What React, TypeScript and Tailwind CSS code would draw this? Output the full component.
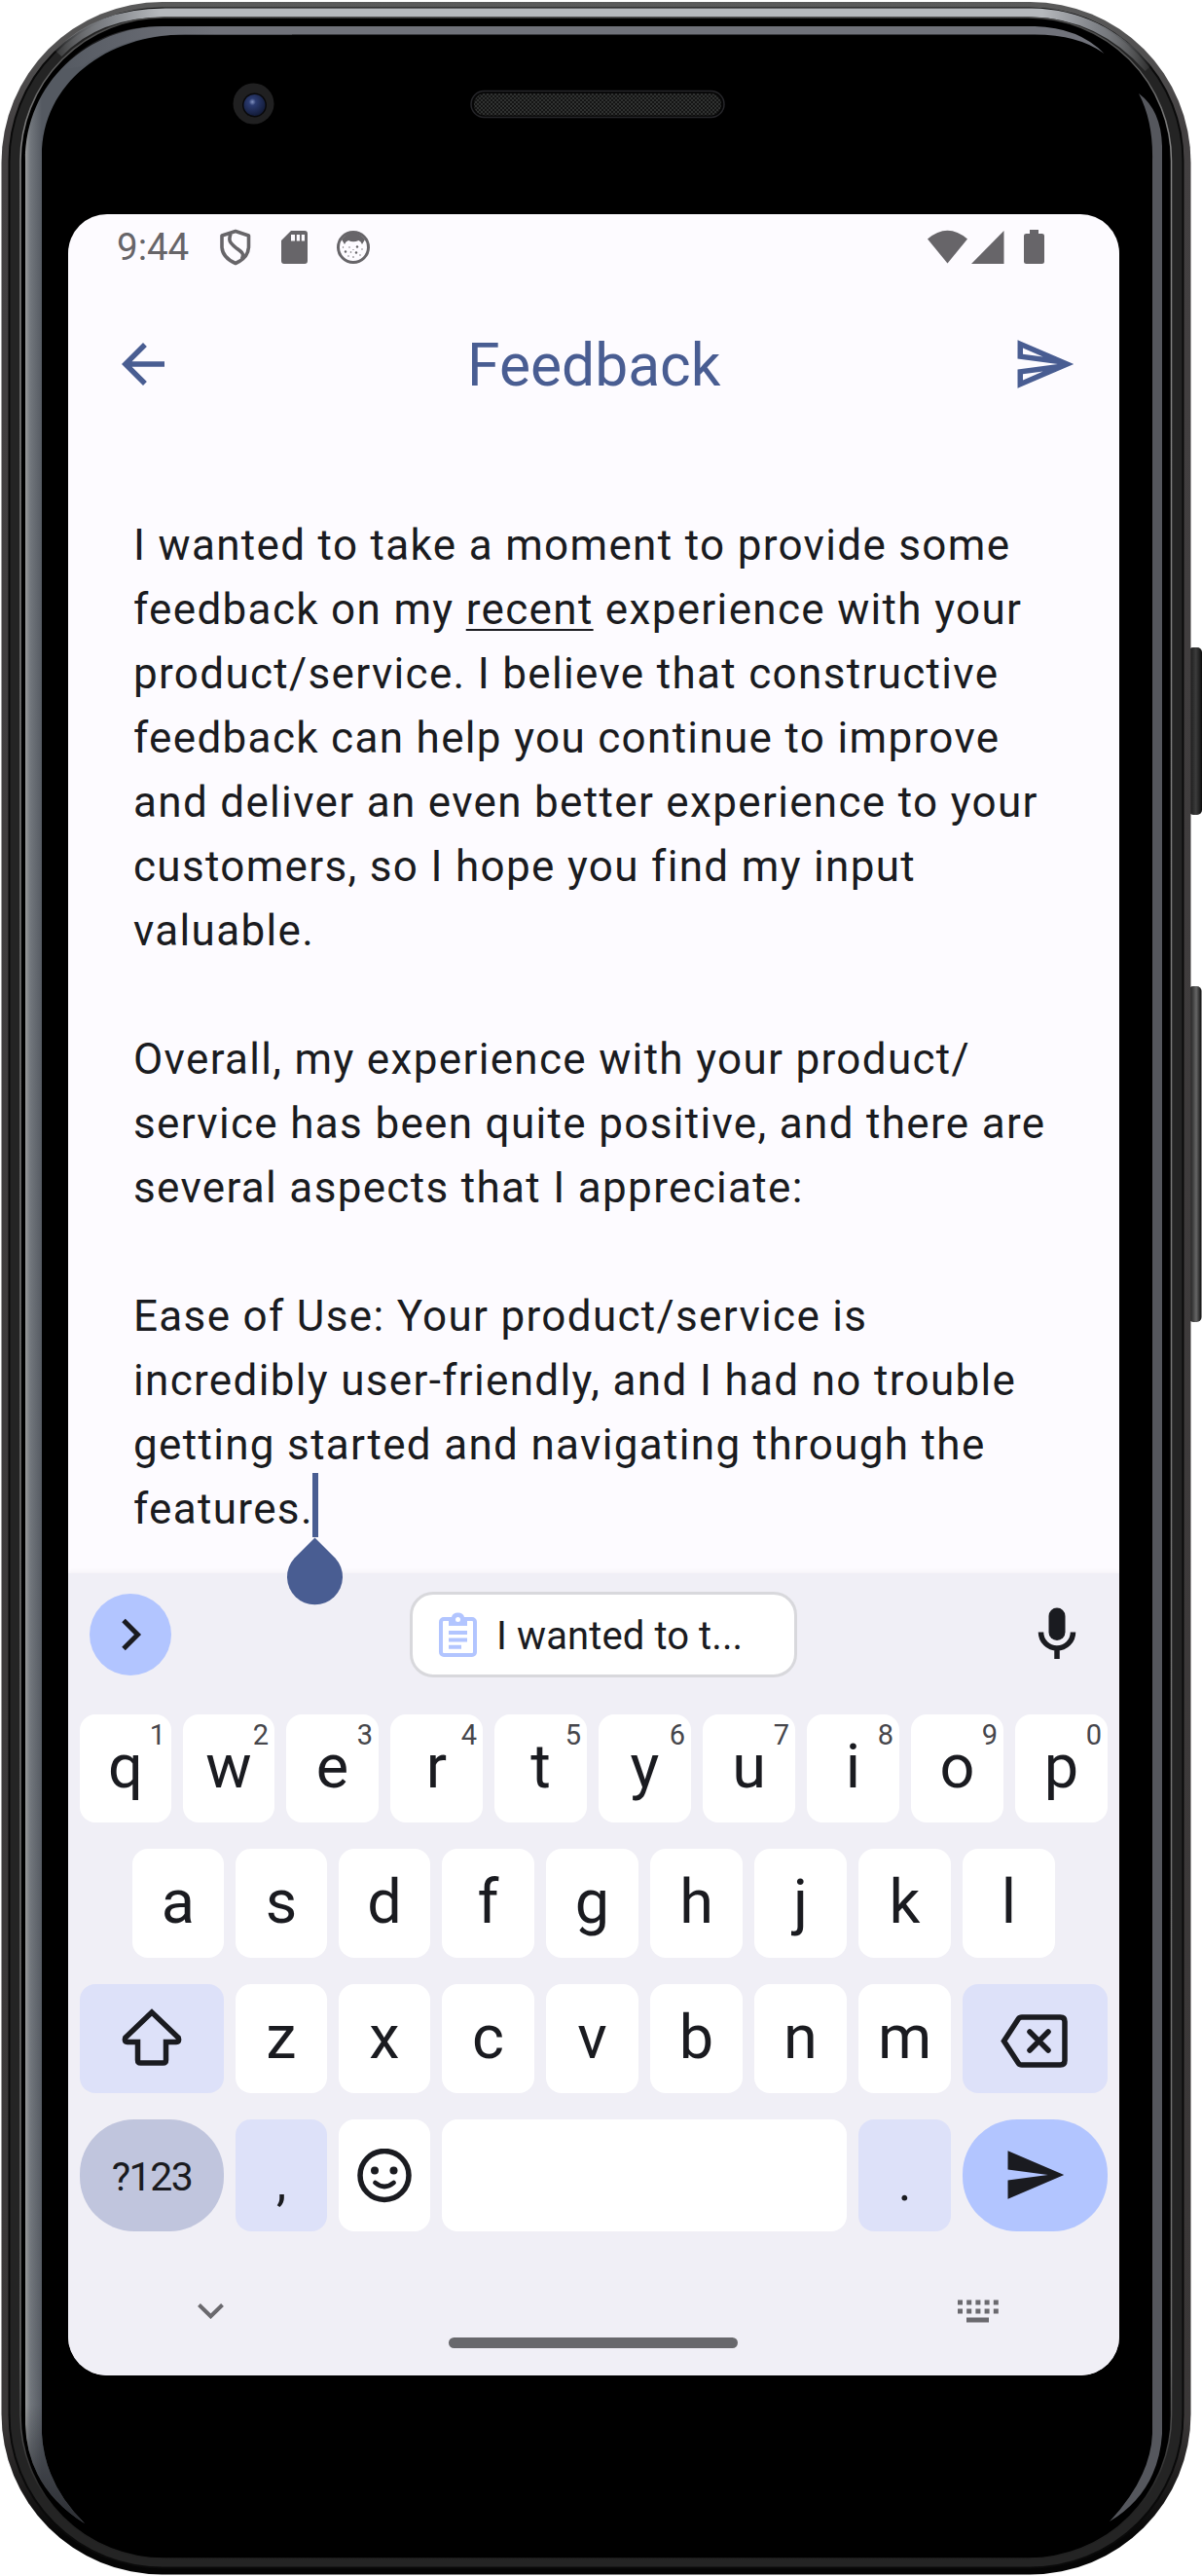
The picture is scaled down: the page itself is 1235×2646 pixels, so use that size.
import React from "react";

const PARAGRAPHS: string[][] = [
  [
    "I wanted to take a moment to provide some",
    "feedback on my recent experience with your",
    "product/service. I believe that constructive",
    "feedback can help you continue to improve",
    "and deliver an even better experience to your",
    "customers, so I hope you find my input",
    "valuable.",
  ],
  [
    "Overall, my experience with your product/",
    "service has been quite positive, and there are",
    "several aspects that I appreciate:",
  ],
  [
    "Ease of Use: Your product/service is",
    "incredibly user-friendly, and I had no trouble",
    "getting started and navigating through the",
    "features.",
  ],
];

const ROW_1 = ["q", "w", "e", "r", "t", "y", "u", "i", "o", "p"];
const ROW_2 = ["a", "s", "d", "f", "g", "h", "j", "k", "l"];
const ROW_3 = ["z", "x", "c", "v", "b", "n", "m"];

function PhoneShell() {
  return (
    <svg className="pointer-events-none absolute inset-0 h-[2646px] w-[1235px]" viewBox="0 0 1235 2646" fill="none" aria-hidden="true">
      <defs>
        <linearGradient id="rimLeft" gradientUnits="userSpaceOnUse" x1="26" y1="0" x2="43" y2="0">
          <stop offset="0" stopColor="#9a9b9b" />
          <stop offset="0.3" stopColor="#72777d" />
          <stop offset="1" stopColor="#555a62" />
        </linearGradient>
        <linearGradient id="rimTop" gradientUnits="userSpaceOnUse" x1="60" y1="0" x2="220" y2="0">
          <stop offset="0" stopColor="#70727a" stopOpacity="0" />
          <stop offset="1" stopColor="#70727a" />
        </linearGradient>
        <linearGradient id="rimTail" gradientUnits="userSpaceOnUse" x1="0" y1="2470" x2="0" y2="2592">
          <stop offset="0" stopColor="#2c2e33" stopOpacity="0" />
          <stop offset="1" stopColor="#2c2e33" />
        </linearGradient>
        <linearGradient id="topLight" gradientUnits="userSpaceOnUse" x1="50" y1="0" x2="1185" y2="0">
          <stop offset="0" stopColor="#b9bcc0" stopOpacity="0" />
          <stop offset="0.05" stopColor="#7d8085" />
          <stop offset="0.1" stopColor="#b5b8bc" />
          <stop offset="0.9" stopColor="#b5b8bc" />
          <stop offset="0.95" stopColor="#7d8085" />
          <stop offset="1" stopColor="#b9bcc0" stopOpacity="0" />
        </linearGradient>
        <linearGradient id="hair" gradientUnits="userSpaceOnUse" x1="0" y1="18" x2="0" y2="2628">
          <stop offset="0" stopColor="#444" />
          <stop offset="0.05" stopColor="#858585" />
          <stop offset="0.92" stopColor="#6d6d6d" />
          <stop offset="0.98" stopColor="#222" />
        </linearGradient>
        <linearGradient id="edge" gradientUnits="userSpaceOnUse" x1="0" y1="0" x2="0" y2="2646">
          <stop offset="0" stopColor="#5b5b5b" />
          <stop offset="0.05" stopColor="#434041" />
          <stop offset="0.94" stopColor="#3a3737" />
          <stop offset="0.985" stopColor="#050505" />
        </linearGradient>
        <linearGradient id="btn" x1="0" y1="0" x2="1" y2="0">
          <stop offset="0" stopColor="#111" />
          <stop offset="0.55" stopColor="#3c3c3c" />
          <stop offset="1" stopColor="#0c0c0c" />
        </linearGradient>
        <linearGradient id="btn2" x1="0" y1="0" x2="1" y2="0">
          <stop offset="0" stopColor="#0c0c0c" />
          <stop offset="0.6" stopColor="#666" />
          <stop offset="1" stopColor="#0c0c0c" />
        </linearGradient>
        <radialGradient id="lens" cx="0.4" cy="0.35" r="0.65">
          <stop offset="0" stopColor="#8292c0" />
          <stop offset="0.25" stopColor="#2b3b70" />
          <stop offset="1" stopColor="#131c3a" />
        </radialGradient>
        <pattern id="mesh" width="4" height="4" patternUnits="userSpaceOnUse">
          <rect width="4" height="4" fill="#151515" />
          <circle cx="1" cy="1" r="0.8" fill="#505452" />
          <circle cx="3" cy="3" r="0.8" fill="#505452" />
        </pattern>
      </defs>
      <rect x="1221" y="665" width="14" height="172" rx="5" fill="url(#btn)" />
      <rect x="1221" y="1013" width="13.500" height="345" rx="5" fill="url(#btn2)" />
      <rect x="1.500" y="2" width="1222" height="2642.500" rx="165" fill="url(#edge)" />
      <rect x="9.500" y="8.500" width="1206" height="2629" rx="157" fill="#242424" stroke="#0a0a0a" strokeWidth="2" />
      <path d="M60 55 Q100 13 170 13 H1060 Q1130 14 1180 70" stroke="url(#topLight)" strokeWidth="9" />
      <rect x="21" y="18" width="1182.500" height="2610" rx="147" fill="#000" stroke="url(#hair)" strokeWidth="1.500" />
      <path
        d="M26 165 C26 85 90 27 168 27 H300 V35.500 H190 C110 35.500 43 85 43 160 V2500 Q46 2552 87 2592 Q28 2555 26 2490 Z"
        fill="url(#rimLeft)"
      />
      <path d="M26 2470 H43 V2500 Q46 2552 87 2592 Q28 2555 26 2490 Z" fill="url(#rimTail)" />
      <path d="M60 72 C90 40 125 27 168 27 H1063 Q1108 28 1134.500 55 Q1108 35.500 1063 35.500 H190 C150 35.500 115 45 85 68 Z" fill="url(#rimTop)" />
      <path d="M1170 96 Q1193 113 1194 150 V2500 Q1190 2560 1140 2590 Q1182 2545 1184 2500 V165 Q1185 125 1170 96 Z" fill="#55575d" />
      <circle cx="260.500" cy="106.500" r="21" fill="#202021" />
      <circle cx="261.500" cy="108" r="12.500" fill="#08080a" />
      <circle cx="261.500" cy="108" r="11" fill="url(#lens)" />
      <rect x="484" y="93.500" width="260" height="27" rx="13.500" fill="#060606" stroke="#26262a" strokeWidth="1.500" />
      <rect x="487" y="96" width="254" height="22.500" rx="11" fill="url(#mesh)" />
    </svg>
  );
}

function StatusBar() {
  return (
    <div className="flex h-[67px] items-center pl-[50px] pr-[77px] text-[#676569]">
      <span className="w-[106px] pt-[2px] text-[38.5px] leading-none">9:44</span>
      <svg className="h-[38px] w-[32px]" viewBox="0 0 32 38" fill="none" stroke="currentColor" strokeWidth="3.600" strokeLinejoin="round">
        <path d="M16 2.500 L29.500 7 V18 C29.500 26 24 32 16 35.500 C8 32 2 26 2 18 V7 Z" />
        <path d="M11 5 C8 13 11 15 17 20 C23 24 25 26 22.500 31" />
      </svg>
      <svg className="ml-[31px] h-[34px] w-[27px]" viewBox="0 0 27 34" fill="currentColor">
        <path fillRule="evenodd" d="M10 0 H24 Q27 0 27 3 V31 Q27 34 24 34 H3 Q0 34 0 31 V10 Z M10 4 V10.500 H14 V4 Z M15.800 4 V10.500 H19 V4 Z M20.800 4 V10.500 H24 V4 Z" />
      </svg>
      <svg className="ml-[30px] h-[34px] w-[34px]" viewBox="0 0 34 34" fill="currentColor">
        <circle cx="17" cy="17" r="15.500" fill="none" stroke="currentColor" strokeWidth="3" />
        <path d="M5 9 Q17 -5 29 9 L26 14 Q25 11 22.500 10 Q17 12.500 12 10 Q9 11 8 14 Z" />
        <g>
          <circle cx="9" cy="21.500" r="1.200" /><circle cx="21" cy="16.500" r="1.200" /><circle cx="20" cy="22.500" r="1.200" />
          <circle cx="13" cy="17" r="0.700" /><circle cx="14.500" cy="22" r="0.800" /><circle cx="26" cy="19" r="0.700" />
          <circle cx="12" cy="26" r="0.700" /><circle cx="17" cy="27" r="0.800" /><circle cx="24" cy="25" r="0.700" />
          <circle cx="6.500" cy="17" r="0.700" /><circle cx="17" cy="19.500" r="0.600" />
        </g>
      </svg>
      <svg className="ml-auto h-[35px] w-[121px]" viewBox="0 0 121 35" fill="currentColor">
        <path d="M21.500 34.500 L1 9.500 Q21.500 -8 42 9.500 Z" />
        <path d="M79.500 1 V35 H46 Z" />
        <path d="M106 0 H115 V4 H118.500 Q121 4 121 6 V33 Q121 35 118.500 35 H102.500 Q100 35 100 33 V6 Q100 4 102.500 4 H106 Z" />
      </svg>
    </div>
  );
}

function AppBar() {
  return (
    <header className="mt-[44px] flex h-[86px] items-center justify-between pl-11 pr-[43.5px] text-[#495d92]">
      <svg className="h-[66px] w-[66px]" viewBox="0 0 24 24" fill="currentColor">
        <path d="M20 11H7.830l5.590-5.590L12 4l-8 8 8 8 1.410-1.410L7.830 13H20v-2z" />
      </svg>
      <h1 className="pt-[5px] text-[60.5px] leading-none">Feedback</h1>
      <svg className="h-[66px] w-[66px]" viewBox="0 0 24 24" fill="currentColor">
        <path d="M4.010 6.030l7.510 3.220-7.520-1 .010-2.220m7.500 8.720L4 17.970v-2.220l7.510-1M2.010 3L2 10l15 2-15 2 .010 7L23 12 2.010 3z" />
      </svg>
    </header>
  );
}

function Caret() {
  return (
    <span className="relative inline-block h-[66px] w-0 align-top">
      <span className="absolute left-[-1px] top-[-4px] h-[66px] w-[6px] bg-[#495d92]" />
      <svg className="absolute left-[-26.5px] top-[62px] z-10 h-[70px] w-[57px]" viewBox="0 0 57 70" fill="#495d92">
        <path d="M28.500 0.500 L49.500 21.500 A28.500 28.500 0 1 1 7.500 21.500 Z" />
      </svg>
    </span>
  );
}

function Line({ text }: { text: string }) {
  const parts = text.split("recent");
  return (
    <div className="h-[66px] whitespace-nowrap">
      {parts.length > 1 ? (
        <>
          {parts[0]}
          <span className="underline decoration-[2px] underline-offset-[5px]">recent</span>
          {parts[1]}
        </>
      ) : (
        text
      )}
      {text === "features." && <Caret />}
    </div>
  );
}

function Key({ label, hint, narrow }: { label: string; hint?: string; narrow?: boolean }) {
  return (
    <div
      className={
        "relative flex h-full shrink-0 items-center justify-center rounded-2xl bg-white pb-1 text-[63px] leading-none " +
        (narrow ? "w-[94px]" : "w-[95px]")
      }
    >
      {label}
      {hint && <span className="absolute right-[6px] top-[7px] text-[29px] font-[450] leading-none text-[#46464b]">{hint}</span>}
    </div>
  );
}

function Keyboard() {
  return (
    <section className="h-[824px] bg-[#f0eff6] px-3 text-[#1a1b20] shadow-[0_-1px_5px_rgba(0,0,0,0.05)]">
      <div className="flex items-center justify-between pl-[10px] pr-[19px] pt-[19px]">
        <div className="flex h-[84px] w-[84px] items-center justify-center rounded-full bg-[#b2c5ff]">
          <svg className="ml-[2px] mt-[-1px] h-[34px] w-[22px]" viewBox="0 0 22 34" fill="none" stroke="currentColor" strokeWidth="5">
            <path d="M3 2.500 L17.500 17 L3 31.500" />
          </svg>
        </div>
        <div className="ml-[11px] flex h-[88px] w-[398px] items-center rounded-[24px] border-[3px] border-[#d8d8dc] bg-white pl-[27px]">
          <svg className="h-[46px] w-[39px]" viewBox="0 0 39 46">
            <rect x="2" y="7" width="35" height="37" rx="3" fill="none" stroke="#b2c5ff" strokeWidth="4" />
            <path d="M10 5 H13 Q14 0.500 19.500 0.500 Q25 0.500 26 5 H29 V14 H10 Z" fill="#b2c5ff" />
            <circle cx="19.500" cy="7.500" r="2.500" fill="#fff" />
            <path d="M10 21 H29 M10 28.500 H29 M10 35.700 H23" stroke="#b2c5ff" strokeWidth="4" />
          </svg>
          <span className="ml-[20px] whitespace-nowrap pt-[3px] text-[40px] font-[450] leading-none tracking-[0.1px]">I wanted to t...</span>
        </div>
        <svg className="h-[66px] w-[66px]" viewBox="0 0 66 66" fill="none" stroke="currentColor" strokeWidth="5.500">
          <rect x="24.500" y="5.500" width="17" height="33.500" rx="8.500" fill="currentColor" stroke="none" />
          <path d="M16.500 30.500 A16.500 16.500 0 0 0 49.500 30.500 M33 47 V58" />
        </svg>
      </div>

      <div className="mt-[38px] flex h-[111px] gap-3">
        {ROW_1.map((k, i) => (
          <Key key={k} label={k} hint={String((i + 1) % 10)} narrow={i < 2} />
        ))}
      </div>
      <div className="mt-[27px] flex h-[112px] gap-3 px-[54px]">
        {ROW_2.map((k, i) => (
          <Key key={k} label={k} narrow={i < 3} />
        ))}
      </div>
      <div className="mt-[27px] flex h-[112px] gap-3">
        <div className="flex w-[148px] items-center justify-center rounded-2xl bg-[#dde1f9]">
          <svg className="mb-[6px] h-[62px] w-[66px]" viewBox="0 0 66 62" fill="none" stroke="currentColor" strokeWidth="5.500">
            <path d="M33 7 L5.800 33 Q4.200 37.500 8 37.500 H18.500 V56 Q18.500 59 21.500 59 H44.500 Q47.500 59 47.500 56 V37.500 H58 Q61.800 37.500 60.200 33 Z" />
          </svg>
        </div>
        {ROW_3.map((k, i) => (
          <Key key={k} label={k} narrow={i < 2} />
        ))}
        <div className="flex w-[149px] items-center justify-center rounded-2xl bg-[#dde1f9]">
          <svg className="mr-[1px] mt-[4px] h-[55px] w-[70px]" viewBox="0 0 70 55" fill="none" stroke="currentColor" strokeWidth="5.500" strokeLinecap="round">
            <path d="M3.500 27.500 L18.500 4.500 Q19.500 3 22 3 H61.500 Q66 3 66 7.500 V47.500 Q66 52 61.500 52 H22 Q19.500 52 18.500 50.500 Z" />
            <path d="M30 18 L49 37 M49 18 L30 37" />
          </svg>
        </div>
      </div>
      <div className="mt-[27px] flex h-[115px] gap-3">
        <div className="flex w-[148px] items-center justify-center rounded-[56px] bg-[#c0c5dd] pt-[3px] text-[41px] font-[450] leading-none tracking-[-1.5px]">?123</div>
        <div className="flex w-[94px] items-center justify-center rounded-2xl bg-[#dde1f9] pt-4 text-[52px] leading-none">,</div>
        <div className="flex w-[94px] items-center justify-center rounded-2xl bg-white">
          <svg className="h-[56px] w-[56px]" viewBox="0 0 56 56" fill="none" stroke="currentColor" strokeWidth="5.500" strokeLinecap="round">
            <circle cx="28" cy="27.500" r="25" />
            <path d="M18.500 35 Q28 43 37.500 35" strokeWidth="4.800" />
            <circle cx="18" cy="22.500" r="4" fill="currentColor" stroke="none" />
            <circle cx="37.500" cy="22.500" r="4" fill="currentColor" stroke="none" />
          </svg>
        </div>
        <div className="flex-1 rounded-2xl bg-white" />
        <div className="flex w-[95px] items-center justify-center rounded-2xl bg-[#dde1f9] pt-4 text-[52px] leading-none">.</div>
        <div className="flex w-[149px] items-center justify-center rounded-[56px] bg-[#b2c5ff]">
          <svg className="mb-[1px] mr-[2px] h-[66px] w-[66px]" viewBox="0 0 24 24" fill="currentColor">
            <path d="M2.010 21L23 12 2.010 3 2 10l15 2-15 2z" />
          </svg>
        </div>
      </div>

      <div className="mt-[70px] flex items-start pl-[121px] text-[#6a696e]">
        <svg className="mt-[4px] h-[16px] w-[27px]" viewBox="0 0 27 16" fill="none" stroke="currentColor" strokeWidth="4">
          <path d="M1.500 1.500 L13.500 13.300 L25.500 1.500" />
        </svg>
        <div className="ml-[231px] mt-[39px] h-[11px] w-[297px] rounded-full bg-[#68686c]" />
        <svg className="ml-[226px] h-[24px] w-[42px]" viewBox="0 0 42 24" fill="currentColor">
          {[0, 9.2, 18.4, 27.6, 36.8].map((x) => (
            <g key={x}>
              <rect x={x} y="0.500" width="5" height="5" />
              <rect x={x} y="9.500" width="5" height="5" />
            </g>
          ))}
          <rect x="9" y="18.500" width="23" height="5" />
        </svg>
      </div>
    </section>
  );
}

export default function App() {
  return (
    <div className="relative h-[2646px] w-[1235px] overflow-hidden bg-white font-['Roboto',sans-serif]">
      <PhoneShell />
      <div className="relative ml-[70px] mt-[220px] flex h-[2220px] w-[1080px] flex-col overflow-hidden rounded-[40px] bg-[#fdfbff]">
        <StatusBar />
        <AppBar />
        <main className="relative z-10 mt-[110px] h-[1089px] shrink-0 pl-[67px] text-[44px] leading-[66px] tracking-[1.33px] text-[#1a1b20]">
          {PARAGRAPHS.map((lines, i) => (
            <div key={i} className="mb-[66px]">
              {lines.map((l) => (
                <Line key={l} text={l} />
              ))}
            </div>
          ))}
        </main>
        <Keyboard />
      </div>
    </div>
  );
}
